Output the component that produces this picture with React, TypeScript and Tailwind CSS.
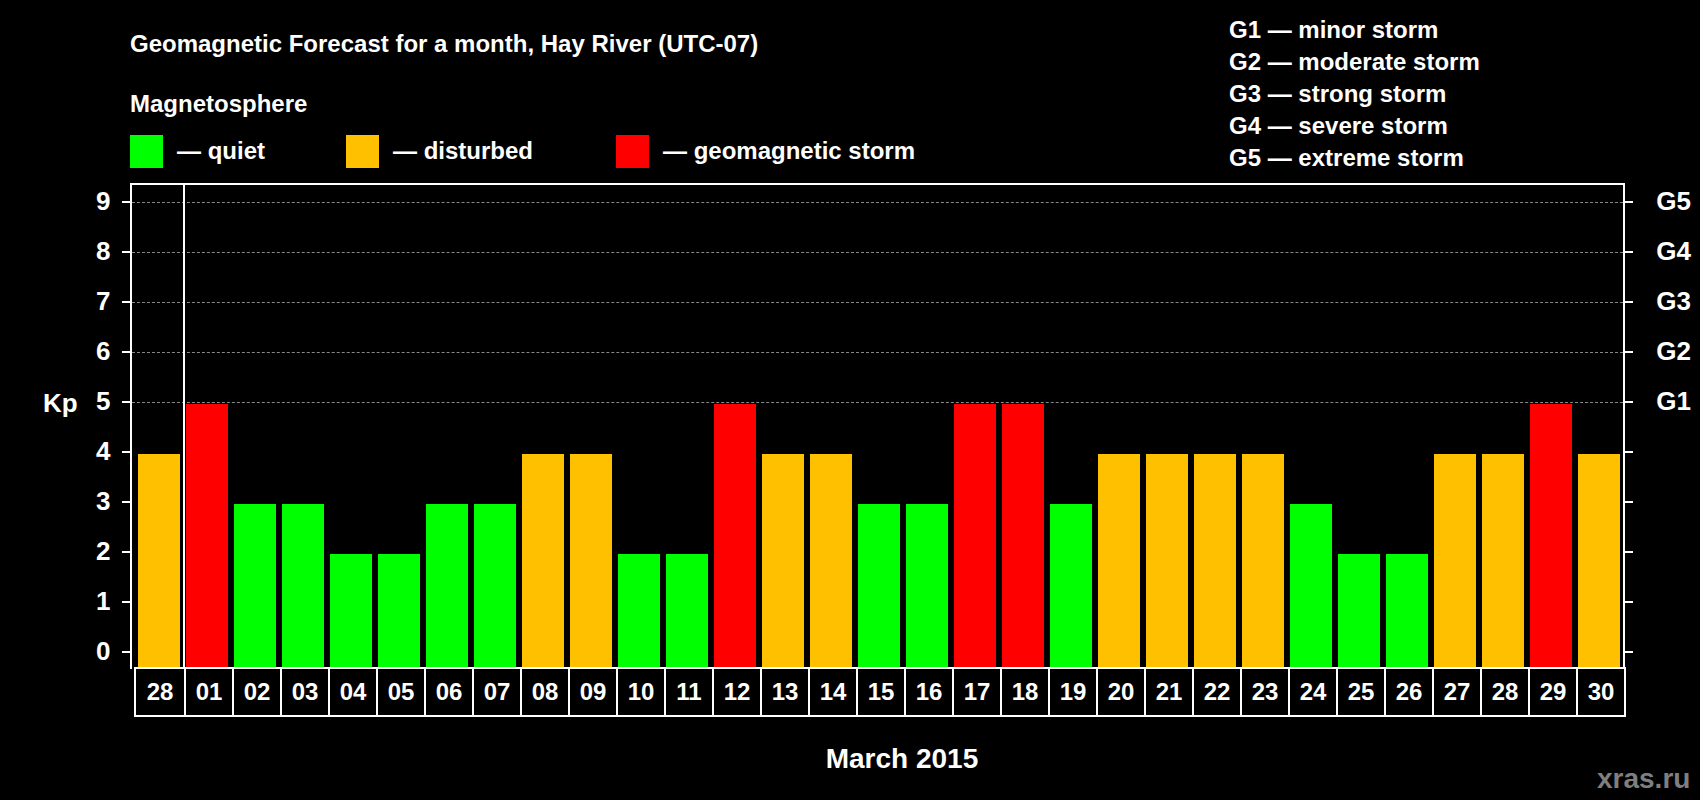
const data = [4,5,3,3,2,2,3,3,4,4,2,2,5,4,4,3,3,5,5,3,4,4,4,4,3,2,2,4,4,5,4];
const labels = ["28","01","02","03","04","05","06","07","08","09","10","11","12","13","14","15","16","17","18","19","20","21","22","23","24","25","26","27","28","29","30"];
const color = (k: number) => (k >= 5 ? "bg-[#ff0000]" : k === 4 ? "bg-[#ffc000]" : "bg-[#00ff00]");
const gLabels: Record<number, string> = { 9: "G5", 8: "G4", 7: "G3", 6: "G2", 5: "G1" };

export default function App() {
  const levels = [9,8,7,6,5,4,3,2,1,0];
  return (
    <div className="w-[1700px] h-[800px] bg-black text-white font-bold relative overflow-hidden" style={{ fontFamily: '"Liberation Sans", Arial, sans-serif' }}>
      <div className="absolute left-[130px] top-[26px] text-[24px]">Geomagnetic Forecast for a month, Hay River (UTC-07)</div>
      <div className="absolute left-[130px] top-[86px] text-[24px]">Magnetosphere</div>
      <div className="absolute left-[130px] top-[133px] flex items-center text-[24px]">
        <div className="w-[33px] h-[33px] bg-[#00ff00]" />
        <span className="ml-[14px] w-[169px]">— quiet</span>
        <div className="w-[33px] h-[33px] bg-[#ffc000]" />
        <span className="ml-[14px] w-[223px]">— disturbed</span>
        <div className="w-[33px] h-[33px] bg-[#ff0000]" />
        <span className="ml-[14px]">— geomagnetic storm</span>
      </div>
      <div className="absolute left-[1229px] top-[14px] flex flex-col text-[24px] leading-[32px]">
        <div>G1 — minor storm</div>
        <div>G2 — moderate storm</div>
        <div>G3 — strong storm</div>
        <div>G4 — severe storm</div>
        <div>G5 — extreme storm</div>
      </div>
      <div className="absolute left-[43px] top-[384px] text-[26px]">Kp</div>

      {/* chart */}
      <div className="absolute left-[130px] top-[183px] w-[1495px] h-[486px] border-2 border-b-0 border-white">
        {levels.map((l) => (
          <div key={l} className="absolute left-0 right-0" style={{ top: 202 - 183 - 2 + (9 - l) * 50 }}>
            {l >= 5 && <div className="absolute left-0 right-0 border-t border-dashed border-[#888]" />}
            <div className="absolute left-[-10px] w-[8px] h-[2px] bg-white -top-[1px]" />
            <div className="absolute right-[-10px] w-[8px] h-[2px] bg-white -top-[1px]" />
            <div className="absolute left-[-36px] -top-[16px] text-[26px] leading-[30px]">{l}</div>
            {gLabels[l] && <div className="absolute right-[-68px] -top-[16px] text-[26px] leading-[30px]">{gLabels[l]}</div>}
          </div>
        ))}
        <div className="absolute top-0 bottom-0 left-[51px] w-[2px] bg-white" />
        <div className="absolute left-[3px] bottom-0 flex items-end">
          {data.map((k, i) => (
            <div key={i} className="w-[48px] flex justify-center">
              <div className={`w-[42px] ${color(k)}`} style={{ height: k * 50 + 15 }} />
            </div>
          ))}
        </div>
      </div>
      <div className="absolute left-[134px] top-[667px] flex border-2 border-white">
        {labels.map((t, i) => (
          <div key={i} className={`w-[48px] h-[46px] flex items-center justify-center text-[24px] ${i > 0 ? "border-l-2 border-white" : ""}`}>{t}</div>
        ))}
      </div>
      <div className="absolute left-[0px] w-[1804px] top-[738px] text-center text-[28px]">March 2015</div>
      <div className="absolute left-[1597px] top-[758px] text-[28px] text-[#7f7f7f]">xras.ru</div>
    </div>
  );
}
